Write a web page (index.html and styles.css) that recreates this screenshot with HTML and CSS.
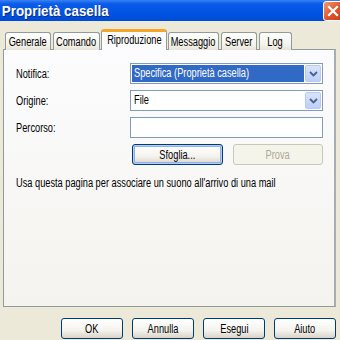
FILE: index.html
```html
<!DOCTYPE html>
<html lang="it">
<head>
    <meta charset="UTF-8">
    <title>Proprietà casella</title>
    <link rel="stylesheet" href="styles.css">
</head>
<body>
    <div class="window">
        <div class="titlebar">
            <span class="title">Proprietà casella</span>
            <span class="close">
                <svg width="12" height="12" viewBox="0 0 12 12"><path d="M2 2 L10 10 M10 2 L2 10" stroke="#fff" stroke-width="2.2" stroke-linecap="square"/></svg>
            </span>
        </div>

        <div class="tabs">
            <div class="tab t-gen"><span class="t">Generale</span></div>
            <div class="tab t-com"><span class="t">Comando</span></div>
            <div class="tab active t-rip"><span class="t">Riproduzione</span></div>
            <div class="tab t-msg"><span class="t">Messaggio</span></div>
            <div class="tab t-srv"><span class="t">Server</span></div>
            <div class="tab t-log"><span class="t">Log</span></div>
        </div>

        <div class="panel">
            <div class="row">
                <label class="lbl"><span class="t left">Notifica:</span></label>
                <div class="combo">
                    <span class="combo-text selected"><span class="t left">Specifica (Proprietà casella)</span></span>
                    <span class="arrow"><svg width="9" height="6" viewBox="0 0 9 6"><path d="M1 1 L4.5 4.5 L8 1" fill="none" stroke="#4d6185" stroke-width="1.8"/></svg></span>
                </div>
            </div>
            <div class="row">
                <label class="lbl"><span class="t left">Origine:</span></label>
                <div class="combo">
                    <span class="combo-text"><span class="t left">File</span></span>
                    <span class="arrow"><svg width="9" height="6" viewBox="0 0 9 6"><path d="M1 1 L4.5 4.5 L8 1" fill="none" stroke="#4d6185" stroke-width="1.8"/></svg></span>
                </div>
            </div>
            <div class="row">
                <label class="lbl"><span class="t left">Percorso:</span></label>
                <div class="textbox"></div>
            </div>
            <div class="btn-row">
                <div class="btn focus"><span class="t">Sfoglia...</span></div>
                <div class="btn disabled"><span class="t">Prova</span></div>
            </div>
            <p class="note"><span class="t left">Usa questa pagina per associare un suono all'arrivo di una mail</span></p>
        </div>

        <div class="footer">
            <div class="btn"><span class="t">OK</span></div>
            <div class="btn"><span class="t">Annulla</span></div>
            <div class="btn"><span class="t">Esegui</span></div>
            <div class="btn"><span class="t">Aiuto</span></div>
        </div>
    </div>
</body>
</html>
```

FILE: styles.css
```css
body {
    margin: 0;
    font-family: "Liberation Sans", Arial, sans-serif;
    font-size: 12px;
    color: #000;
}
/* the dialog font is a narrow Tahoma, so squeeze the text */
.t {
    display: inline-block;
    white-space: nowrap;
    transform: scaleX(0.77);
    transform-origin: center;
}
.t.left {
    transform-origin: left center;
}
.window {
    width: 340px;
    height: 340px;
    background-color: #ece9d8;
    overflow: hidden;
}
.titlebar {
    height: 21px;
    background: linear-gradient(#3a82f4 0%, #0a5ce8 18%, #0054e3 60%, #004bd6 100%);
    display: flex;
    align-items: center;
    justify-content: space-between;
}
.title {
    color: #fff;
    font-weight: bold;
    font-size: 15px;
    padding-left: 2px;
    display: inline-block;
    white-space: nowrap;
    transform: scaleX(0.89);
    transform-origin: left center;
    text-shadow: 1px 1px 0 #0a2a7a;
}
.close {
    width: 20px;
    height: 20px;
    margin-right: -3px;
    box-sizing: border-box;
    border: 1px solid #fff;
    border-radius: 3px;
    background: linear-gradient(135deg, #f29a74, #e0522a 55%, #c8401a);
    display: flex;
    align-items: center;
    justify-content: center;
}
.tabs {
    display: flex;
    align-items: flex-end;
    height: 29px;
    padding-left: 5px;
    margin-bottom: -1px;
    position: relative;
}
.tab {
    height: 18px;
    box-sizing: border-box;
    border: 1px solid #919b9c;
    border-bottom: none;
    border-radius: 3px 3px 0 0;
    background: linear-gradient(#fff, #f3f2ea 70%, #e7e5d8);
    display: flex;
    justify-content: center;
    align-items: center;
    padding-top: 1px;
}
.tab.active {
    height: 21px;
    background: #fcfcfe;
    border-top: 3px solid #f5a52a;
    padding-top: 0;
    padding-bottom: 2px;
}
.t-gen { width: 46px; margin-right: 2px; }
.t-com { width: 47px; margin-right: 1px; }
.t-rip { width: 66px; margin-right: 1px; }
.t-msg { width: 51px; margin-right: 2px; }
.t-srv { width: 36px; margin-right: 2px; }
.t-log { width: 33px; }
.panel {
    margin-left: 3px;
    width: 333px;
    height: 258px;
    box-sizing: border-box;
    border: 1px solid #919b9c;
    border-right: 2px solid #a6adb4;
    background: linear-gradient(#fcfcfe, #f4f3ee);
    padding: 13px 11px 0 12px;
}
.row {
    display: flex;
    align-items: center;
    height: 21px;
    margin-bottom: 6px;
}
.lbl {
    width: 114px;
}
.combo, .textbox {
    width: 194px;
    height: 21px;
    box-sizing: border-box;
    border: 1px solid #7f9db9;
    background: #fff;
    display: flex;
    align-items: center;
    padding: 1px;
}
.combo-text {
    flex: 1;
    height: 17px;
    line-height: 17px;
    padding-left: 2px;
    overflow: hidden;
}
.combo-text.selected {
    background: #316ac5;
    color: #fff;
    margin-right: 1px;
}
.arrow {
    width: 16px;
    height: 17px;
    box-sizing: border-box;
    border: 1px solid #b9c9ef;
    border-radius: 2px;
    background: linear-gradient(#d8e4fc, #bccffa);
    display: flex;
    align-items: center;
    justify-content: center;
}
.btn-row {
    display: flex;
    gap: 10px;
    padding-left: 116px;
}
.btn {
    width: 91px;
    height: 21px;
    box-sizing: border-box;
    border: 1px solid #003c74;
    border-radius: 3px;
    background: linear-gradient(#fff, #f4f3ee 60%, #d9d3c8);
    display: flex;
    align-items: center;
    justify-content: center;
}
.btn.focus {
    box-shadow: inset 0 0 0 1px #b6cdf5, inset 0 0 0 2px #8eb0ed;
}
.btn.disabled {
    border-color: #c9c7ba;
    background: #f5f4ea;
    color: #aca899;
}
.note {
    margin: 11px 0 0 0;
}
.footer {
    display: flex;
    justify-content: flex-end;
    gap: 9px;
    padding: 11px 4px 0 0;
}
.footer .btn {
    width: 62px;
}
```
